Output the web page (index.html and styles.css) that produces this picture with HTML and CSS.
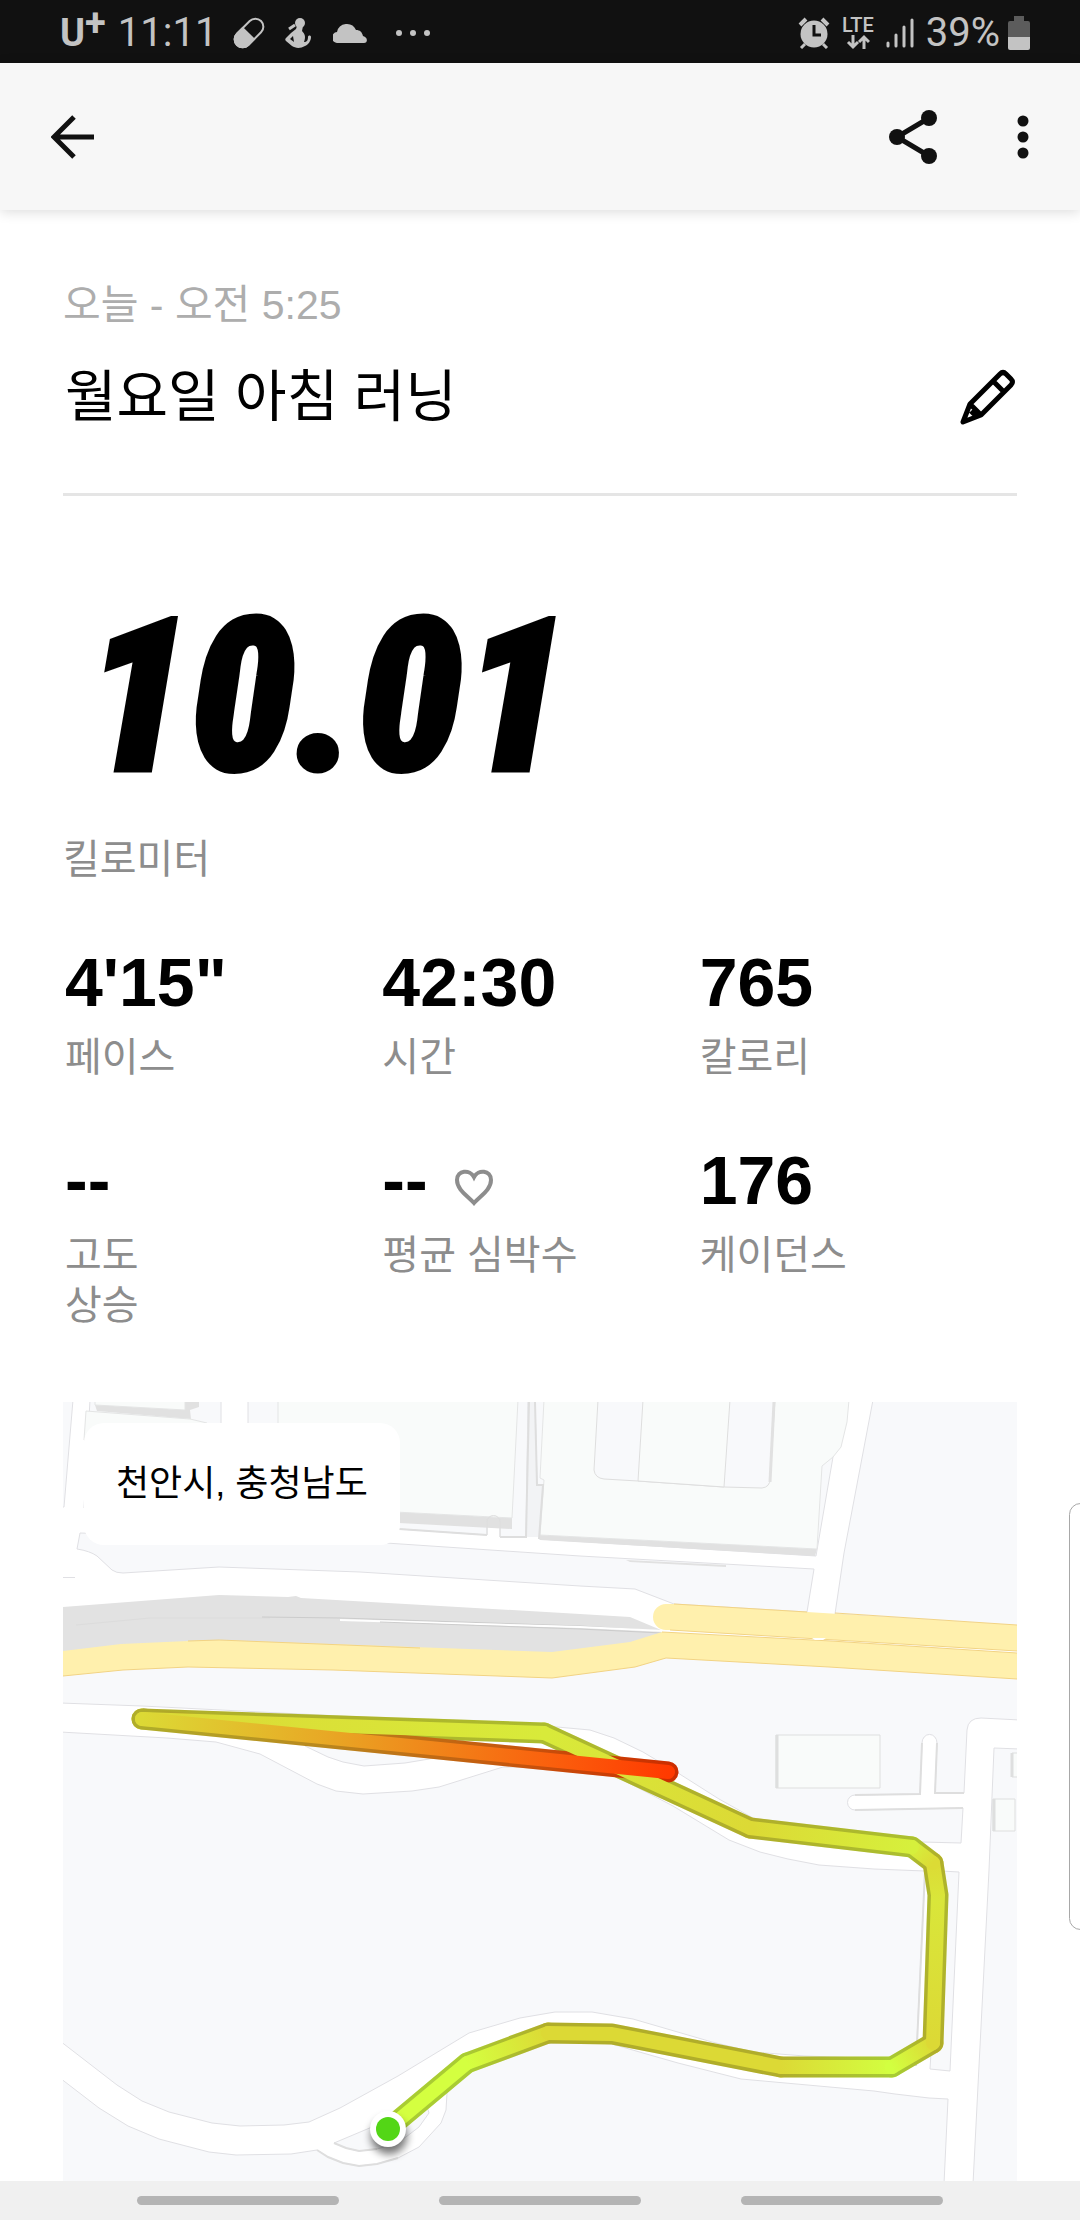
FILE: index.html
```html
<!DOCTYPE html>
<html lang="ko">
<head>
<meta charset="utf-8">
<meta name="viewport" content="width=device-width, initial-scale=1">
<title>월요일 아침 러닝</title>
<link rel="stylesheet" href="styles.css">
</head>
<body>
<div class="statusbar">
  <div class="status-left">
    <span class="carrier">U<span class="carrier-plus">+</span></span>
    <span class="clock">11:11</span>
    <svg class="icon-pill" width="32" height="32" viewBox="0 0 32 32" fill="none" stroke="#c3c3c3" stroke-width="2"><g transform="rotate(-45 16 16)"><rect x="-1" y="8" width="34" height="16" rx="8"/><path d="M16 7H7a9 9 0 0 0 0 18h9z" fill="#c3c3c3" stroke="none"/></g></svg>
    <svg class="icon-figure" width="28" height="32" viewBox="0 0 28 32" fill="#c3c3c3"><circle cx="15" cy="6" r="5"/><path d="M12 9h6l-1 5c3 3 4 6 2 11 3 0 4-2 4-5 0-2 3-2 3 0 0 4-3 8-6 9-5 3-10 2-13 0l-6-5c-1-1-1-2 0-3l5-5 5-4z"/><path d="M4 12l6-4" stroke="#c3c3c3" stroke-width="3"/><path d="M5 22l3-3 1 6z" fill="#111"/></svg>
    <svg class="icon-cloud" width="34" height="20" viewBox="0 0 34 20" fill="#c3c3c3"><path d="M5 20a5.500 5.500 0 0 1-1-11 10 10 0 0 1 19-2c4 0 6 2 7 6 5 1 5 7 1 7z"/></svg>
    <svg class="icon-dots" width="36" height="8" viewBox="0 0 36 8" fill="#c3c3c3"><circle cx="4" cy="4" r="3"/><circle cx="18" cy="4" r="3"/><circle cx="32" cy="4" r="3"/></svg>
  </div>
  <div class="status-right">
    <svg width="32" height="32" viewBox="0 0 32 32" fill="#c3c3c3"><circle cx="16" cy="17" r="13.500"/><path d="M2 8l6-6M24 2l6 6" stroke="#c3c3c3" stroke-width="4"/><path d="M3 31l4-4M29 31l-4-4" stroke="#c3c3c3" stroke-width="3"/><path d="M16 8v10h7" fill="none" stroke="#111" stroke-width="3"/></svg>
    <span class="network">LTE<svg width="24" height="16" viewBox="0 0 24 16" fill="none" stroke="#c3c3c3" stroke-width="3"><path d="M7 1v12M2 8l5 5 5-5M18 15V3M13 8l5-5 5 5"/></svg></span>
    <svg width="28" height="32" viewBox="0 0 28 32" stroke="#c3c3c3" stroke-width="3" stroke-linecap="round"><path d="M2 26v3M10 18v11M18 10v19M26 3v26"/></svg>
    <span class="battery">39%<svg width="22" height="34" viewBox="0 0 22 34"><path d="M6 0h10v5h4a2 2 0 0 1 2 2v15H0V7a2 2 0 0 1 2-2h4z" fill="#5c5c5c"/><path d="M0 21h22v11a2 2 0 0 1-2 2H2a2 2 0 0 1-2-2z" fill="#c3c3c3"/></svg></span>
  </div>
</div>

<header class="appbar">
  <button class="icon-button" type="button" aria-label="뒤로">
    <svg width="44" height="44" viewBox="0 0 44 44" fill="none" stroke="#111" stroke-width="5"><path d="M43 22H6M23 2L3 22l20 20"/></svg>
  </button>
  <div class="appbar-actions">
    <button class="icon-button" type="button" aria-label="공유">
      <svg width="48" height="54" viewBox="0 0 48 54" fill="#111"><path d="M40 8L8 27l32 19" fill="none" stroke="#111" stroke-width="5"/><circle cx="40" cy="8" r="8"/><circle cx="8" cy="27" r="8"/><circle cx="40" cy="46" r="8"/></svg>
    </button>
    <button class="icon-button" type="button" aria-label="더보기">
      <svg width="12" height="44" viewBox="0 0 12 44" fill="#111"><circle cx="6" cy="6" r="5.500"/><circle cx="6" cy="22" r="5.500"/><circle cx="6" cy="38" r="5.500"/></svg>
    </button>
  </div>
</header>

<main class="run">
  <section class="run-head">
    <p class="run-date">오늘 - 오전 5:25</p>
    <div class="title-row">
      <h1 class="run-title">월요일 아침 러닝</h1>
      <button class="icon-button" type="button" aria-label="제목 수정">
        <svg width="58" height="58" viewBox="0 0 58 58" fill="none" stroke="#000" stroke-width="5" stroke-linejoin="round"><path d="M4 54L11 36 41 6q3-3 6 0l5 5q3 3 0 6L22 47zM34 13l11 11M11 36l11 11M12 43l6 6"/></svg>
      </button>
    </div>
  </section>

  <section class="distance">
    <p class="distance-value">10.01</p>
    <p class="label">킬로미터</p>
  </section>

  <dl class="stats">
    <div class="stat"><dt class="label">페이스</dt><dd class="value">4'15"</dd></div>
    <div class="stat"><dt class="label">시간</dt><dd class="value">42:30</dd></div>
    <div class="stat"><dt class="label">칼로리</dt><dd class="value">765</dd></div>
    <div class="stat"><dt class="label">고도<br>상승</dt><dd class="value">--</dd></div>
    <div class="stat"><dt class="label">평균 심박수</dt><dd class="value">-- <svg class="heart" width="40" height="37" viewBox="0 0 40 37" fill="none" stroke="#8d8d8d" stroke-width="4"><path d="M20 34C14 27 3 21 3 11 3 1 16 0 20 8c4-8 17-7 17 3 0 10-11 16-17 23z"/></svg></dd></div>
    <div class="stat"><dt class="label">케이던스</dt><dd class="value">176</dd></div>
  </dl>

  <section class="map">
    <svg class="map-canvas" viewBox="63 1402 954 779" preserveAspectRatio="xMidYMin slice" role="img" aria-label="러닝 경로 지도">
      <defs>
        <linearGradient id="g1" gradientUnits="userSpaceOnUse" x1="467" y1="2063" x2="548" y2="2033"><stop stop-color="#d4ff40"/><stop offset="1" stop-color="#dcd935"/></linearGradient>
        <linearGradient id="g2" gradientUnits="userSpaceOnUse" x1="781" y1="2067" x2="892" y2="2067"><stop stop-color="#dcd935"/><stop offset="1" stop-color="#d2ff40"/></linearGradient>
        <linearGradient id="g3" gradientUnits="userSpaceOnUse" x1="892" y1="2067" x2="933" y2="2043"><stop stop-color="#d2ff40"/><stop offset="1" stop-color="#dcd935"/></linearGradient>
        <linearGradient id="g4" gradientUnits="userSpaceOnUse" x1="0" y1="2043" x2="0" y2="1863"><stop stop-color="#dcd935"/><stop offset=".8" stop-color="#d9e63a"/><stop offset="1" stop-color="#dcdb35"/></linearGradient>
        <linearGradient id="g5" gradientUnits="userSpaceOnUse" x1="933" y1="1863" x2="912" y2="1847"><stop stop-color="#dcdb35"/><stop offset="1" stop-color="#d6f03c"/></linearGradient>
        <linearGradient id="g6" gradientUnits="userSpaceOnUse" x1="912" y1="1847" x2="750" y2="1828"><stop stop-color="#d6f03c"/><stop offset="1" stop-color="#dcd935"/></linearGradient>
        <linearGradient id="g7" gradientUnits="userSpaceOnUse" x1="750" y1="1828" x2="544" y2="1733"><stop stop-color="#dcd935"/><stop offset="1" stop-color="#d8ea3a"/></linearGradient>
        <linearGradient id="g8" gradientUnits="userSpaceOnUse" x1="544" y1="1733" x2="142" y2="1719"><stop stop-color="#d8ea3a"/><stop offset="1" stop-color="#dcd935"/></linearGradient>
        <linearGradient id="g9" gradientUnits="userSpaceOnUse" x1="142" y1="1719" x2="668" y2="1772"><stop stop-color="#dcd935"/><stop offset=".35" stop-color="#e8a825"/><stop offset=".8" stop-color="#fb5c0c"/><stop offset="1" stop-color="#ff3a00"/></linearGradient>
        <filter id="pin-shadow" x="-50%" y="-50%" width="200%" height="200%"><feGaussianBlur stdDeviation="4"/></filter>
        <g id="route-lines">
          <path d="M388 2129L467 2063" stroke="#d4ff40"/>
          <path d="M467 2063L548 2033" stroke="url(#g1)"/>
          <path d="M548 2033L612 2034 781 2067" stroke="#dcd935"/>
          <path d="M781 2067L892 2067" stroke="url(#g2)"/>
          <path d="M892 2067L933 2043" stroke="url(#g3)"/>
          <path d="M933 2043L938 1895 933 1863" stroke="url(#g4)"/>
          <path d="M933 1863L912 1847" stroke="url(#g5)"/>
          <path d="M912 1847L750 1828" stroke="url(#g6)"/>
          <path d="M750 1828L544 1733" stroke="url(#g7)"/>
          <path d="M544 1733L142 1719" stroke="url(#g8)"/>
          <path d="M142 1719L668 1772" stroke="url(#g9)"/>
        </g>
      </defs>
      <rect x="63" y="1402" width="954" height="779" fill="#fff"/>

      <!-- blocks north of the highway -->
      <g fill="#f8f9fb" stroke="#e0e0e4" stroke-width="1">
        <path d="M60 1400H73L64 1507 60 1507z"/>
        <path d="M90 1400H221V1440L84 1508z"/>
        <path d="M248 1400H528L526 1537H500V1522a6 6 0 0 0-13 0V1535L399 1529 248 1520z"/>
        <path d="M535 1400H844L833 1457 816 1556 539 1539 543 1485 537 1485z"/>
        <path d="M80 1533L386 1543 580 1556 814 1569 807 1612 674 1604 635 1589 580 1586 360 1572 219 1567 123 1573Q116 1573 112 1570L97 1556Q90 1551 77 1549z"/>
        <path d="M873 1400L844 1553 835 1614 1020 1626V1400z"/>
        <path d="M60 1577.500H75"/>
      </g>
      <path d="M528 1402h7l2 83h6l-4 52h-13z" fill="#f2f3f5"/>
      <!-- buildings -->
      <path d="M399 1512L512 1518V1529L399 1523zM540 1535L817 1549 815 1556 540 1540zM95 1405L185 1410V1402H199V1407L190 1410 191 1419 97 1411zM816 1462H825L820 1469 816 1467zM626 1560L726 1565V1567L630 1562z" fill="#e1e1e1"/>
      <g fill="#f9fbfa" stroke="#e4e5e5" stroke-width="1">
        <path d="M278 1400H518L512 1518 278 1506z"/>
        <path d="M544 1400H849L847 1422 841 1447 833 1457 822 1466 817 1549 540 1535 544 1480 540 1478z"/>
        <path d="M86 1411L190 1419 207 1423V1440H84z"/>
        <path d="M95 1400H185V1410L95 1405z"/>
      </g>
      <path d="M399 1529L487 1535M500 1537H526L529 1402M535 1402L537 1485H543L539 1539" fill="none" stroke="#dedede" stroke-width="2"/>
      <path d="M487 1535V1522a6 6 0 0 1 13 0V1537" fill="none" stroke="#dedede"/>
      <path d="M598 1400L594 1470Q595 1478 604 1479L638 1481 724 1487 762 1488Q770 1487 770 1479L775 1400z" fill="#f8f9fb" stroke="#dedede" stroke-width="1"/>
      <path d="M643 1400L638 1481 724 1487 730 1400z" fill="#f9fbfa" stroke="#dedede"/>
      <path d="M774 1402L770 1482" stroke="#e1e1e1" stroke-width="3"/>

      <!-- land south of the highway -->
      <path d="M63 1670L188 1660 552 1670 666 1650 1017 1672V2181H63z" fill="#f8f9fb"/>

      <!-- railway -->
      <path d="M63 1607L219 1595 288 1597 296 1596 301 1598 580 1614 630 1617 661 1630 662 1640 552 1665 63 1660z" fill="#e2e2e2"/>
      <path d="M76 1625L150 1618H270" fill="none" stroke="#dcdcdc"/>
      <path d="M262 1617L340 1618 580 1626 662 1631" fill="none" stroke="#ccc"/>
      <path d="M340 1620L580 1627 664 1631" fill="none" stroke="#fff" stroke-width="2"/>
      <path d="M380 1622L580 1629 662 1633" fill="none" stroke="#ccc"/>

      <!-- highway -->
      <path d="M63 1651L121 1644 188 1641 219 1640 552 1652 630 1642 662 1632 831 1641 1017 1653V1679L829 1667 666 1658 635 1667 552 1678 333 1670 188 1667 123 1670 63 1676z" fill="#fff0ad"/>
      <path d="M63 1676L123 1670 188 1667 333 1670 552 1678 635 1667 666 1658 829 1667 1017 1679M188 1641L219 1640 420 1648M662 1632L831 1641 1017 1653" fill="none" stroke="#f2d384"/>
      <path d="M666 1604H674L807 1612 1017 1625V1651L670 1630H666a13 13 0 0 1 0-26z" fill="#fff0ad"/>
      <path d="M674 1604L807 1612M835 1613L1017 1625M670 1630L1017 1651" fill="none" stroke="#f2d384"/>
      <path d="M812 1638h14l-3 2h-8z" fill="#fff"/>

      <!-- streets around the course -->
      <path d="M60 1703L142 1706 557 1727 590 1730 614 1738 643 1752 678 1773 719 1799 753 1818 922 1842 961 1843 963 1808 855 1810a7 7 0 0 1 0-15L920 1794 922 1743a7 8 0 0 1 15 0L935 1793H964L967 1730Q968 1718 981 1718L1020 1720V1749L994 1748 989 1870 973 2184H944L948 2099 929 2098 895 2094 874 2091 741 2079 678 2063 643 2053 612 2044 550 2040 480 2062 447 2093 446 2110 441 2123 419 2147 398 2158 377 2164 359 2166 343 2163 328 2157 317 2150 291 2154 236 2155 209 2152 159 2139 128 2126 99 2108 60 2078V2041L117 2085 142 2101 169 2112 212 2123 240 2126 284 2125 309 2122 340 2108 398 2076 469 2033 520 2018 555 2012H592L633 2019 712 2042 753 2052 805 2056 916 2060 925 1871 874 1869 819 1865 788 1859 760 1852 729 1840 673 1806 600 1768 503 1767 439 1787 412 1791 363 1794 336 1791 317 1784 260 1754 216 1742 167 1738 60 1732z" fill="#fff" stroke="#e0e0e4"/>
      <g fill="#f8f9fb" stroke="#e0e0e4">
        <path d="M305 1746L328 1757 343 1762 364 1766 405 1763 429 1759 480 1745 300 1732z"/>
        <path d="M942 1871L959 1872 950 2071 930 2069z"/>
        <path d="M334 2143L372 2127 400 2110 425 2100 429 2113 419 2127 398 2143 377 2149 359 2151 346 2148z"/>
      </g>
      <path d="M855 1795L920 1794 922 1743M937 1743L935 1793H964M855 1810L963 1808M334 2143L346 2148 359 2151 377 2149M317 2150L328 2157 343 2163 359 2166 377 2164 398 2158M925 1871L916 2066" fill="none" stroke="#dedede" stroke-width="2"/>
      <path d="M776 1735H880V1788H776zM993 1799H1015V1831H993zM1012 1753H1020V1777H1012z" fill="#f9fbfa" stroke="#dedfdf"/>
      <path d="M777 1735V1788M994 1799V1831M1012 1753V1777" stroke="#dedfdf" stroke-width="3"/>

      <!-- route -->
      <g fill="none" stroke-linecap="round" stroke-linejoin="round">
        <use href="#route-lines" stroke-width="21"/>
        <path d="M388 2129L467 2063 548 2033 612 2034 781 2067 892 2067 933 2043 938 1895 933 1863 912 1847 750 1828 544 1733 142 1719 668 1772" stroke="#000" stroke-opacity=".2" stroke-width="21"/>
        <use href="#route-lines" stroke-width="14"/>
      </g>
      <circle cx="389" cy="2136" r="18" fill="#000" opacity=".55" filter="url(#pin-shadow)"/>
      <circle cx="388" cy="2129" r="18" fill="#fff"/>
      <circle cx="388" cy="2129" r="12" fill="#53d616"/>
    </svg>
    <p class="place">천안시, 충청남도</p>
  </section>
</main>

<nav class="navbar">
  <button class="nav-key" type="button" aria-label="최근 앱"></button>
  <button class="nav-key" type="button" aria-label="홈"></button>
  <button class="nav-key" type="button" aria-label="뒤로 가기"></button>
</nav>
<div class="edge-handle"></div>
</body>
</html>
```
FILE: styles.css
```css
* {
  box-sizing: border-box;
}

body {
  position: relative;
  display: flex;
  flex-direction: column;
  min-height: 100vh;
  margin: 0;
  overflow-x: hidden;
  background: #fff;
  color: #000;
  font-family: "Liberation Sans", "Noto Sans CJK KR", sans-serif;
}

p, h1, dl, dd {
  margin: 0;
}

svg {
  display: block;
}

button {
  padding: 0;
  border: 0;
  background: none;
}

.statusbar {
  display: flex;
  justify-content: space-between;
  align-items: center;
  height: 63px;
  padding: 2px 50px 0 60px;
  background: #111;
  color: #c3c3c3;
  font-family: Roboto, sans-serif;
  font-size: 40px;
}

.status-left,
.status-right {
  display: flex;
  align-items: center;
}

.status-left {
  gap: 20px;
}

.status-right {
  gap: 12px;
}

.carrier {
  display: flex;
  font-size: 38px;
  font-weight: 700;
  line-height: 48px;
}

.carrier-plus {
  line-height: 28px;
}

.clock {
  margin-left: -8px;
  margin-right: -4px;
}

.icon-dots {
  margin-left: 8px;
}

.network {
  display: flex;
  flex-direction: column;
  align-items: center;
  font-size: 20px;
  font-weight: 500;
  line-height: 18px;
}

.battery {
  display: flex;
  align-items: center;
  gap: 8px;
}

.appbar {
  display: flex;
  justify-content: space-between;
  align-items: center;
  height: 147px;
  padding: 0 51px;
  background: #f7f7f7;
  box-shadow: 0 2px 12px rgba(0, 0, 0, 0.14);
}

.appbar-actions {
  display: flex;
  align-items: center;
  gap: 80px;
}

.run {
  flex: 1;
  display: flex;
  flex-direction: column;
  padding: 67px 63px 0;
}

.run-head {
  display: flex;
  flex-direction: column;
  gap: 24px;
  padding-bottom: 56px;
  border-bottom: 3px solid #e5e5e5;
}

.run-date {
  color: #adadad;
  font-size: 41px;
  line-height: 56px;
}

.title-row {
  display: flex;
  justify-content: space-between;
  align-items: center;
  padding-left: 2px;
}

.run-title {
  font-size: 56px;
  font-weight: 400;
  line-height: 80px;
}

.distance {
  padding: 97px 0 58px;
}

.distance-value {
  margin-bottom: 31px;
  padding-left: 22px;
  font-family: "Roboto Condensed", Roboto, sans-serif;
  font-size: 212px;
  font-style: italic;
  font-weight: 900;
  line-height: 210px;
  -webkit-text-stroke: 5px #000;
}

.label {
  color: #8d8d8d;
  font-size: 40px;
  line-height: 50px;
}

.stats {
  display: grid;
  grid-template-columns: repeat(3, 1fr);
  gap: 58px 0;
  padding-left: 2px;
}

.stat {
  display: flex;
  flex-direction: column-reverse;
  justify-content: flex-end;
  gap: 10px;
}

.value {
  display: flex;
  align-items: center;
  gap: 26px;
  font-size: 68px;
  font-weight: 700;
  line-height: 80px;
}

.heart {
  margin-top: 14px;
}

.map {
  position: relative;
  flex: 1;
  min-height: 400px;
  margin-top: 72px;
}

.map-canvas {
  position: absolute;
  inset: 0;
  width: 100%;
  height: 100%;
}

.place {
  position: absolute;
  top: 21px;
  left: 21px;
  padding: 36px 32px;
  border-radius: 20px;
  background: #fff;
  font-size: 36px;
  line-height: 50px;
}

.navbar {
  display: flex;
  justify-content: center;
  align-items: center;
  gap: 100px;
  height: 39px;
  background: #f0f0f0;
}

.nav-key {
  width: 202px;
  height: 9px;
  border-radius: 5px;
  background: #b4b4b4;
}

.edge-handle {
  position: absolute;
  top: 1503px;
  right: -12px;
  width: 23px;
  height: 427px;
  border: 1px solid #a8a8a8;
  border-radius: 16px;
  background: #fff;
}
```
